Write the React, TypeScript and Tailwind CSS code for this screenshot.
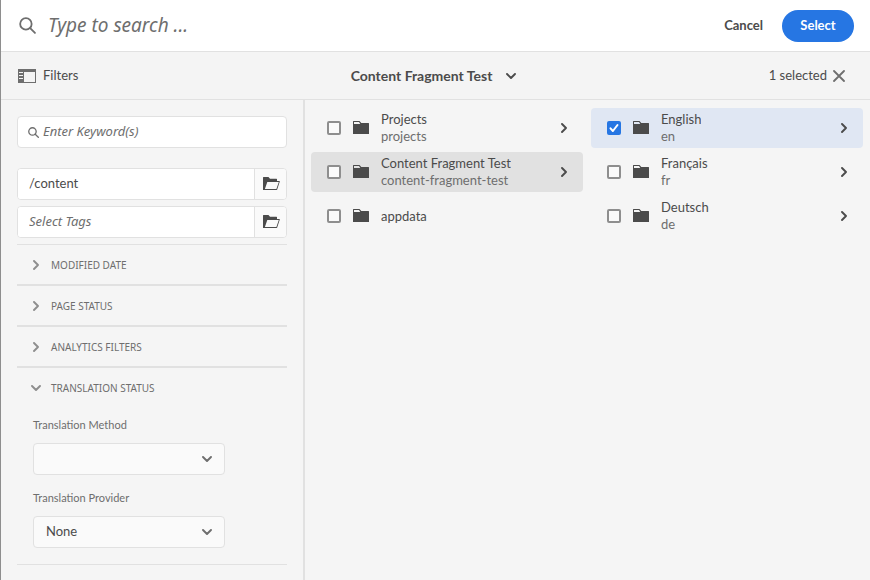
import { useState } from "react";
import type { ReactNode } from "react";

type Item = { title: string; name?: string; children?: boolean; checked?: boolean; active?: boolean };

const parentItems: Item[] = [
  { title: "Projects", name: "projects", children: true },
  { title: "Content Fragment Test", name: "content-fragment-test", children: true, active: true },
  { title: "appdata" },
];

const childItems: Item[] = [
  { title: "English", name: "en", children: true, checked: true },
  { title: "Français", name: "fr", children: true },
  { title: "Deutsch", name: "de", children: true },
];

function ChevronDown({ className = "" }: { className?: string }) {
  return (
    <svg aria-hidden="true" viewBox="0 0 10 6" width="10" height="6" className={className} fill="none" stroke="currentColor" strokeWidth="1.9" strokeLinecap="round" strokeLinejoin="round">
      <path d="M1 1l4 4 4-4" />
    </svg>
  );
}

function ChevronRight({ className = "" }: { className?: string }) {
  return (
    <svg aria-hidden="true" viewBox="0 0 6 10" width="6" height="10" className={className} fill="none" stroke="currentColor" strokeWidth="1.9" strokeLinecap="round" strokeLinejoin="round">
      <path d="M1 1l4 4-4 4" />
    </svg>
  );
}

function SearchIcon({ size, thickness }: { size: number; thickness: number }) {
  return (
    <svg aria-hidden="true" viewBox="0 0 16 16" width={size} height={size} className="shrink-0 text-[#6e6e6e]" fill="none" stroke="currentColor" strokeWidth={thickness} strokeLinecap="round">
      <circle cx="6.5" cy="6.5" r="5.4" />
      <path d="M10.5 10.5l4.5 4.5" />
    </svg>
  );
}

function FolderIcon() {
  return (
    <svg aria-hidden="true" viewBox="0 0 16 14" width="16" height="14" className="shrink-0 text-[#4b4b4b]" fill="currentColor">
      <path fillRule="evenodd" d="M0 13V.5Q0 0 .5 0H6.500L8.300 2H15.500q.5 0 .5.5V13zM1 1V3H7.300L6 1z" />
    </svg>
  );
}

function FolderOpenIcon() {
  return (
    <svg aria-hidden="true" viewBox="0 0 17 14" width="17" height="14" fill="currentColor">
      <path fillRule="evenodd" d="M0 13V.5Q0 0 .5 0H5.500L7 1.700h6.500q.5 0 .5.5V4h2.400q.6 0 .4.6L14.200 12.600q-.1.4-.6.4zM4.300 5L1.900 12h11.500L15.800 5z" />
    </svg>
  );
}

function PathField({ label, value, placeholder }: { label: string; value?: string; placeholder?: string }) {
  return (
    <div className="flex h-8 overflow-hidden rounded border border-[#e1e1e1] bg-white">
      <input aria-label={label} defaultValue={value} placeholder={placeholder} className="min-w-0 flex-1 bg-white px-[11px] text-[13px] text-[#4b4b4b] outline-none placeholder:font-['Noto_Sans',sans-serif] placeholder:italic placeholder:text-[#6e6e6e]" />
      <button type="button" aria-label="Browse" className="flex w-8 shrink-0 items-center justify-center border-l border-[#e1e1e1] bg-[#fafafa] pl-0.5 text-[#4b4b4b]">
        <FolderOpenIcon />
      </button>
    </div>
  );
}

function Section({ title, initial = false, children }: { title: string; initial?: boolean; children?: ReactNode }) {
  const [open, setOpen] = useState(initial);
  return (
    <section className="border-y border-[#e1e1e1]">
      <h3>
        <button type="button" aria-expanded={open} onClick={() => setOpen(!open)} className="flex h-[39px] w-full items-center pt-px font-['Noto_Sans',sans-serif] text-[10px] text-[#6e6e6e]">
          <span className="ml-3 mr-2 flex w-[14px] justify-center text-[#8e8e8e]">{open ? <ChevronDown /> : <ChevronRight />}</span>
          {title}
        </button>
      </h3>
      {open && children}
    </section>
  );
}

function SelectField({ id, label, options }: { id: string; label: string; options: string[] }) {
  return (
    <div className="w-48">
      <label htmlFor={id} className="flex h-7 items-start pt-2 text-[11px] leading-5 text-[#6e6e6e]">{label}</label>
      <div className="relative mt-2">
        <select id={id} className="h-8 w-full appearance-none rounded border border-[#e1e1e1] bg-[#fafafa] pl-3 pr-8 text-[13px] text-[#4b4b4b] outline-none">
          {options.map((o) => <option key={o}>{o}</option>)}
        </select>
        <ChevronDown className="pointer-events-none absolute right-[13px] top-[13px] text-[#6e6e6e]" />
      </div>
    </div>
  );
}

function Row({ item }: { item: Item }) {
  const [checked, setChecked] = useState(!!item.checked);
  const tone = checked ? "bg-[#e0e7f3]" : item.active ? "bg-[#e1e1e1]" : "";
  return (
    <li className={`flex h-10 items-center rounded pl-4 pr-4 ${tone}`}>
      <label className="flex min-w-0 flex-1 items-center">
        <span className="relative flex shrink-0">
          <input type="checkbox" checked={checked} onChange={(e) => setChecked(e.target.checked)} className="h-[14px] w-[14px] appearance-none rounded-[2px] border-2 border-[#8e8e8e] bg-[#fafafa] checked:border-[#2676e3] checked:bg-[#2676e3]" />
          {checked && (
            <svg aria-hidden="true" viewBox="0 0 14 14" width="14" height="14" className="pointer-events-none absolute inset-0" fill="none" stroke="white" strokeWidth="2" strokeLinecap="round" strokeLinejoin="round">
              <path d="M3.500 7.300l2.400 2.700 4.600-6" />
            </svg>
          )}
        </span>
        <span className="ml-3 mr-3 flex"><FolderIcon /></span>
        <span className="min-w-0 text-[13px] leading-[17px] text-[#4b4b4b]">
          <span className="block truncate">{item.title}</span>
          {item.name && <span className="block truncate text-[#6e6e6e]">{item.name}</span>}
        </span>
      </label>
      {item.children && (
        <button type="button" aria-label={`Open ${item.title}`} className="text-[#4b4b4b]">
          <ChevronRight />
        </button>
      )}
    </li>
  );
}

function Column({ items }: { items: Item[] }) {
  return (
    <ul className="flex min-w-0 flex-col gap-1">
      {items.map((item) => <Row key={item.title} item={item} />)}
    </ul>
  );
}

export default function App() {
  return (
    <div className="flex min-h-screen flex-col border-l border-[#8e8e8e] bg-[#f5f5f5] font-[Lato,'Noto_Sans',sans-serif] text-[#4b4b4b]">
      <header className="flex h-13 shrink-0 items-center border-b border-[#e1e1e1] bg-white pl-[18px] pr-4">
        <SearchIcon size={17} thickness={1.7} />
        <input aria-label="Search" placeholder="Type to search ..." className="ml-3 min-w-0 flex-1 bg-transparent font-['Noto_Sans',sans-serif] text-[19px] italic outline-none placeholder:text-[#6e6e6e]" />
        <button type="button" className="px-[19px] text-[13px] font-bold">Cancel</button>
        <button type="button" className="h-8 w-[72px] rounded-full bg-[#2676e3] text-[13px] font-bold text-white">Select</button>
      </header>

      <div className="grid h-12 shrink-0 grid-cols-[1fr_auto_1fr] items-center border-b border-[#e1e1e1] bg-[#f4f4f4] pl-[17px] pr-[25px]">
        <button type="button" className="flex items-center gap-[7px] text-[13px]">
          <svg aria-hidden="true" viewBox="0 0 18 14" width="18" height="14" className="text-[#6e6e6e]">
            <path fill="currentColor" fillRule="evenodd" d="M0 0h18v14H0zM6 3v10h11V3zM1 3v1h4V3zM1 6v1h4V6zM1 9v1h4V9z" />
          </svg>
          Filters
        </button>
        <button type="button" className="ml-1 flex items-center gap-[14px] text-[14px] font-bold">
          Content Fragment Test
          <ChevronDown />
        </button>
        <div className="flex items-center justify-end gap-[6px] text-[13px]">
          1 selected
          <button type="button" aria-label="Clear selection" className="text-[#6e6e6e]">
            <svg aria-hidden="true" viewBox="0 0 12 12" width="12" height="12" fill="none" stroke="currentColor" strokeWidth="1.800" strokeLinecap="round">
              <path d="M1 1l10 10M11 1l-10 10" />
            </svg>
          </button>
        </div>
      </div>

      <div className="flex flex-1">
        <aside className="w-[304px] shrink-0 border-r-2 border-[#e1e1e1] px-4 pb-4 pt-4">
          <div className="flex h-8 items-center gap-1 rounded border border-[#e1e1e1] bg-white pl-[10px]">
            <SearchIcon size={11} thickness={1.9} />
            <input aria-label="Keywords" placeholder="Enter Keyword(s)" className="min-w-0 flex-1 font-['Noto_Sans',sans-serif] text-[13px] italic outline-none placeholder:text-[#6e6e6e]" />
          </div>
          <div className="mb-[6px] mt-5 flex flex-col gap-[6px]">
            <PathField label="Path" value="/content" />
            <PathField label="Tags" placeholder="Select Tags" />
          </div>
          <Section title="MODIFIED DATE" />
          <Section title="PAGE STATUS" />
          <Section title="ANALYTICS FILTERS" />
          <Section title="TRANSLATION STATUS" initial>
            <div className="flex flex-col gap-[5px] pb-4 pl-4">
              <SelectField id="method" label="Translation Method" options={["", "Human Translation", "Machine Translation"]} />
              <SelectField id="provider" label="Translation Provider" options={["None"]} />
            </div>
          </Section>
        </aside>
        <main className="grid flex-1 grid-cols-2 content-start gap-2 pl-[6px] pr-[7px] pt-2">
          <Column items={parentItems} />
          <Column items={childItems} />
        </main>
      </div>
    </div>
  );
}
